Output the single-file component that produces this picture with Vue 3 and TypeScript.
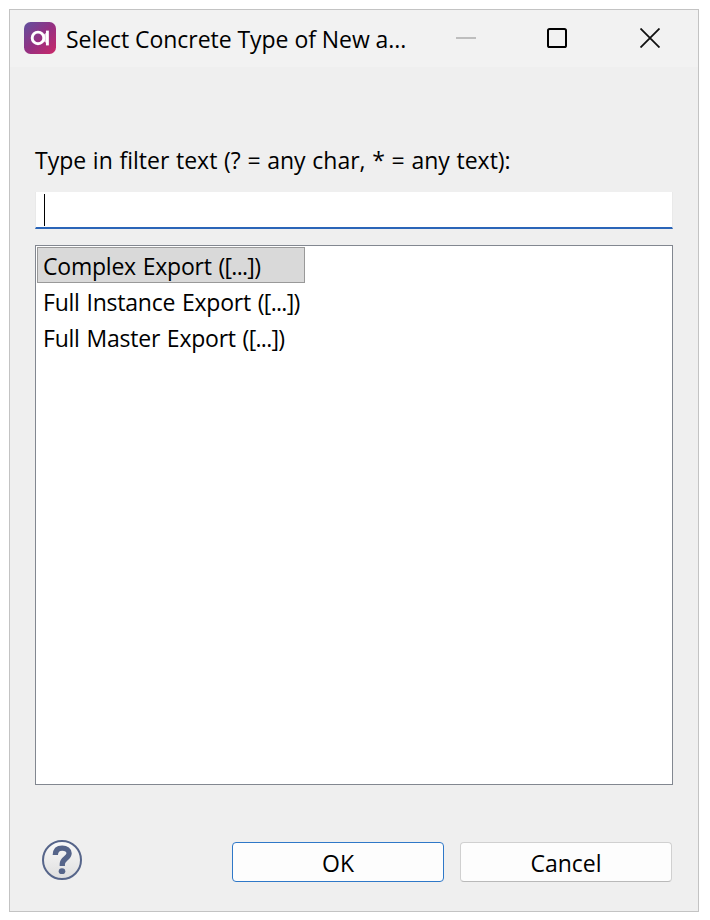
<script setup lang="ts">
import { ref } from 'vue'

interface TypeOption {
  id: string
  name: string
  suffix: string
}

const title = 'Select Concrete Type of New a...'
const options: TypeOption[] = [
  { id: 'complex', name: 'Complex Export ', suffix: '([...])' },
  { id: 'instance', name: 'Full Instance Export ', suffix: '([...])' },
  { id: 'master', name: 'Full Master Export ', suffix: '([...])' },
]
const selected = ref<string>('complex')
</script>

<template>
  <div class="dialog">
    <header class="titlebar">
      <svg class="logo" width="32" height="32" viewBox="0 0 32 32">
        <defs>
          <linearGradient id="logoFill" x1="0" y1="0" x2="1" y2="1">
            <stop offset="0" stop-color="#60519f" />
            <stop offset="0.5" stop-color="#943082" />
            <stop offset="1" stop-color="#cb2868" />
          </linearGradient>
        </defs>
        <rect width="32" height="32" rx="6.5" fill="url(#logoFill)" />
        <circle cx="14" cy="15.9" r="5.8" fill="none" stroke="#fff" stroke-width="2.9" />
        <path d="M23.4 8.6V23.4" fill="none" stroke="#fff" stroke-width="2.9" />
        <path d="M19 13L22.6 10.5V21.3L19 18.8Z" fill="#fff" fill-opacity="0.75" />
      </svg>
      <h1 class="title">{{ title }}</h1>
      <div class="controls">
        <svg width="20" height="20" viewBox="0 0 20 20"><path d="M0 10H20" stroke="#bebebe" stroke-width="2" /></svg>
        <svg width="20" height="20" viewBox="0 0 20 20"><rect x="1" y="1" width="18" height="18" rx="1.6" fill="none" stroke="#000" stroke-width="2" /></svg>
        <svg width="20" height="20" viewBox="0 0 20 20"><path d="M0.5 0.5L19.5 19.5M19.5 0.5L0.5 19.5" stroke="#111" stroke-width="1.8" /></svg>
      </div>
    </header>

    <main class="content">
      <p class="label">Type in filter text (? = any char, * = any text):</p>
      <div class="filter"><i class="caret"></i></div>
      <ul class="list">
        <li
          v-for="option in options"
          :key="option.id"
          :class="['item', { selected: option.id === selected }]"
          @click="selected = option.id"
        >{{ option.name }}<span class="suffix">{{ option.suffix }}</span></li>
      </ul>
      <footer class="footer">
        <svg class="help" width="40" height="40" viewBox="0 0 40 40">
          <defs>
            <linearGradient id="helpFill" x1="0" y1="0" x2="0" y2="1">
              <stop offset="0" stop-color="#fafafa" />
              <stop offset="1" stop-color="#dedede" />
            </linearGradient>
          </defs>
          <circle cx="20" cy="20" r="19" fill="url(#helpFill)" stroke="#56658a" stroke-width="2" />
          <path d="M13.3 15C13.4 10.4 15.9 8.1 20.2 8.1C24.5 8.1 27.1 10.1 27.1 13.3C27.1 18.3 20.3 18.6 20.3 24V26" fill="none" stroke="#56658a" stroke-width="5.3" />
          <ellipse cx="20" cy="31.2" rx="3.3" ry="2.9" fill="#56658a" />
        </svg>
        <button class="button ok">OK</button>
        <button class="button cancel">Cancel</button>
      </footer>
    </main>
  </div>
</template>

<style>
body {
  background: #fff;
}
</style>

<style scoped>
.dialog {
  box-sizing: border-box;
  width: 690px;
  height: 903px;
  margin: 9px 0 0 9px;
  border: 1px solid #c3c3c3;
  background: #efefef;
  color: #000;
  font-family: "Open Sans", "Noto Sans", sans-serif;
  font-size: 23px;
  line-height: 36px;
  white-space: nowrap;
}
.titlebar {
  display: flex;
  align-items: center;
  box-sizing: border-box;
  height: 57px;
  padding: 0 38px 0 14px;
  background: #f2f2f2;
}
.logo {
  margin-bottom: 1px;
}
.title {
  margin: 0 0 0 10px;
  font-size: 23px;
  font-weight: 400;
  letter-spacing: -0.05px;
}
.controls {
  display: flex;
  gap: 71px;
  margin: 0 0 1px auto;
}
.controls svg:last-child {
  margin-left: 2px;
}
.content {
  padding: 75px 25px 0;
}
.label {
  height: 36px;
  margin: 0;
  word-spacing: 0.7px;
}
.filter {
  box-sizing: border-box;
  width: 638px;
  height: 37px;
  margin-top: 14px;
  padding: 2px 9px;
  border-bottom: 2px solid #2a65b8;
  border-left: 1px solid #e9e9e9;
  border-right: 1px solid #e9e9e9;
  background: #fff;
}
.caret {
  display: block;
  width: 1px;
  height: 32px;
  margin-left: -1px;
  background: #000;
}
.list {
  box-sizing: border-box;
  width: 638px;
  height: 540px;
  margin: 16px 0 0;
  padding: 1px;
  border: 1px solid #828790;
  background: #fff;
  list-style: none;
}
.item {
  box-sizing: border-box;
  width: 268px;
  height: 36px;
  padding-left: 5px;
  border: 1px solid transparent;
  line-height: 36px;
  letter-spacing: -0.22px;
  word-spacing: 1px;
}
.suffix {
  letter-spacing: -0.7px;
}
.item.selected {
  border-color: #999;
  background: #d9d9d9;
}
.footer {
  display: flex;
  align-items: flex-start;
  margin-top: 55px;
  padding-left: 7px;
}
.button {
  box-sizing: border-box;
  width: 212px;
  height: 40px;
  margin: 2px 0 0;
  padding: 1px 0 0;
  border: 1px solid #d0d0d0;
  border-bottom-color: #b9b9b9;
  border-radius: 4px;
  background: #fdfdfd;
  color: #000;
  font: inherit;
  line-height: 36px;
}
.ok {
  margin-left: 150px;
  border-color: #2f78c8;
}
.cancel {
  margin-left: 16px;
}
</style>
